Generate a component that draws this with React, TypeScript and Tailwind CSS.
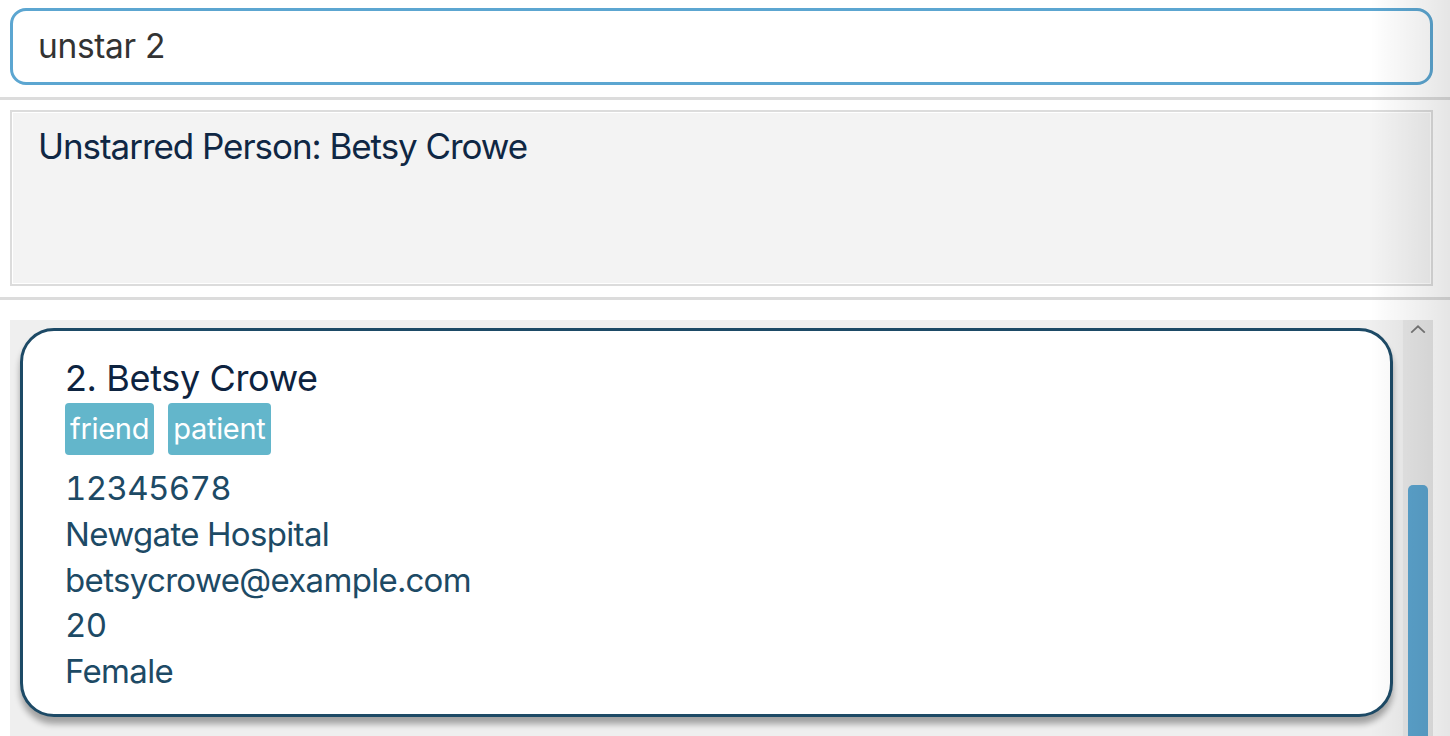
import React from "react";

const tags = ["friend", "patient"];
const details = ["12345678", "Newgate Hospital", "betsycrowe@example.com", "20", "Female"];

function PersonCard() {
  return (
    <div className="mx-[10px] mt-[8px] h-[389px] rounded-[34px] border-[3px] border-[#1d4a66] bg-white pl-[42px] pt-[27px] shadow-[0_7px_6px_rgba(0,0,0,0.33)]">
      <div className="text-[36px] leading-[40px] tracking-[-0.01em] text-[#0d2340]">2. Betsy Crowe</div>
      <div className="mt-[5px] flex gap-[14px]">
        {tags.map((t) => (
          <span
            key={t}
            className="rounded-[4px] bg-[#63b6cb] px-[5px] text-[29px] leading-[52px] tracking-[-0.01em] text-white"
          >
            {t}
          </span>
        ))}
      </div>
      <div className="mt-[11px] flex flex-col">
        {details.map((d) => (
          <div key={d} className="text-[33px] leading-[45.75px] tracking-[-0.02em] tabular-nums text-[#1d4a65]">
            {d}
          </div>
        ))}
      </div>
    </div>
  );
}

export default function App() {
  return (
    <div className="relative h-[736px] w-[1450px] overflow-hidden bg-white font-['Inter',sans-serif]">
      {/* command box */}
      <div className="px-[10px] pb-[12px] pt-[8px]">
        <div className="flex h-[77px] w-[1423px] items-center rounded-[16px] border-[3px] border-[#5ca6d1] bg-white pl-[25px] text-[33.5px] tracking-[-0.01em] text-[#333]">
          unstar 2
        </div>
      </div>
      <div className="h-[3px] bg-[#dcdcdc]" />

      {/* result display */}
      <div className="px-[10px] pb-[11px] pt-[10px]">
        <div className="h-[176px] w-[1423px] border-2 border-[#dcdcdc] bg-[#f3f3f3] pl-[26px] pt-[12px] shadow-[inset_0_0_0_1px_#fff] text-[35px] leading-[44px] tracking-[-0.03em] text-[#0f2744]">
          Unstarred Person: Betsy Crowe
        </div>
      </div>
      <div className="h-[3px] bg-[#dcdcdc]" />

      {/* person list */}
      <div className="mx-[10px] mt-[20px] flex h-[420px] w-[1423px] bg-[#efefef]">
        <div className="flex-1">
          <PersonCard />
        </div>
        <div className="flex w-[30px] flex-col items-center bg-[#e6e6e6]">
          <svg width="18" height="10" viewBox="0 0 18 10" className="mt-[5px]">
            <path d="M1 9 L9 1.5 L17 9" fill="none" stroke="#777" strokeWidth="2" />
          </svg>
          <div className="mt-[152px] h-[300px] w-[20px] rounded-t-[5px] bg-[#5ba3cd]" />
        </div>
      </div>

      {/* window edge shading */}
      <div className="pointer-events-none absolute bottom-0 right-0 top-0 w-[80px] bg-gradient-to-r from-transparent to-black/10" />
    </div>
  );
}
